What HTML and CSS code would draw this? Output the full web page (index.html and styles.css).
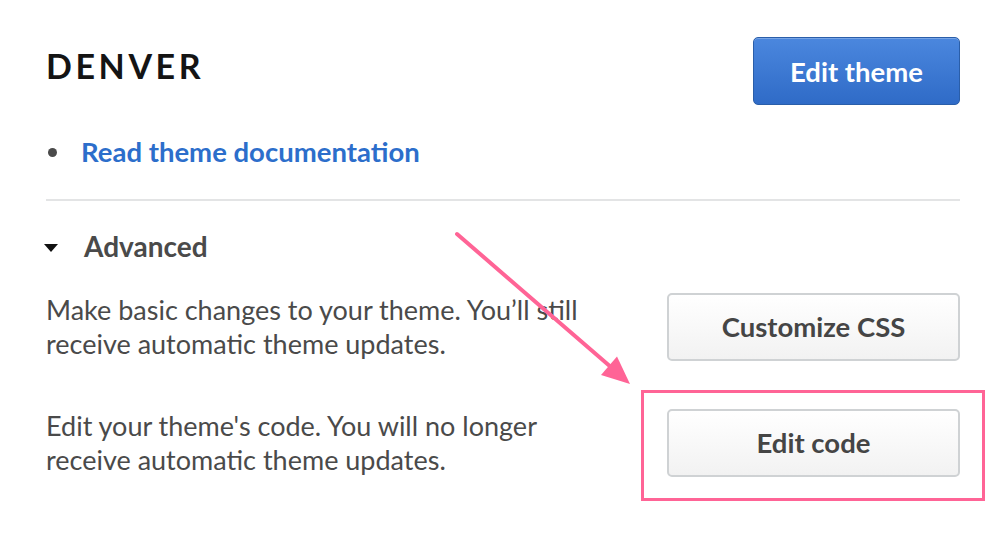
FILE: index.html
```html
<!DOCTYPE html>
<html lang="en">
<head>
<meta charset="utf-8">
<title>Denver theme</title>
<link rel="stylesheet" href="styles.css">
</head>
<body>
<main class="page">
  <header class="header">
    <h1 class="title">DENVER</h1>
    <button class="btn btn-primary">Edit theme</button>
  </header>
  <ul class="links">
    <li><a class="link" href="#">Read theme documentation</a></li>
  </ul>
  <hr class="divider">
  <section class="advanced">
    <div class="advanced-head">
      <span class="caret"></span>
      <span class="advanced-label">Advanced</span>
    </div>
    <div class="row">
      <p class="desc">Make basic changes to your theme. You’ll still receive automatic theme updates.</p>
      <button class="btn btn-default">Customize CSS</button>
    </div>
    <div class="row">
      <p class="desc">Edit your theme's code. You will no longer receive automatic theme updates.</p>
      <button class="btn btn-default">Edit code</button>
    </div>
  </section>
</main>
<svg class="annotation" width="994" height="548" viewBox="0 0 994 548" aria-hidden="true">
  <rect x="642.5" y="391.5" width="341" height="108" fill="none" stroke="#ff6496" stroke-width="3"/>
  <line x1="457" y1="234" x2="612" y2="368" stroke="#ff6496" stroke-width="4" stroke-linecap="round"/>
  <polygon points="601,375 617,356.5 630,384" fill="#ff6496"/>
</svg>
</body>
</html>
```
FILE: styles.css
```css
* { box-sizing: border-box; }

html, body {
  margin: 0;
  padding: 0;
  background: #ffffff;
}

body {
  font-family: Lato, "Open Sans", "Liberation Sans", sans-serif;
  color: #4a4a4a;
  position: relative;
  width: 994px;
  height: 548px;
  overflow: hidden;
}

.page {
  padding: 37px 34px 0 46px;
}

.header {
  display: flex;
  justify-content: space-between;
  align-items: flex-start;
}

.title {
  margin: 9px 0 0 0;
  font-size: 34px;
  line-height: 1.2;
  font-weight: 700;
  letter-spacing: 3.6px;
  color: #141414;
}

.btn {
  font-family: inherit;
  font-weight: 700;
  height: 68px;
  border-radius: 5px;
  cursor: pointer;
  padding: 0;
}

.btn-primary {
  width: 207px;
  font-size: 27.5px;
  color: #ffffff;
  background: linear-gradient(#4b87de, #2f6bc7);
  border: 1.5px solid #2a5ea9;
  box-shadow: inset 0 1px 0 rgba(255,255,255,0.25);
}

.btn-default {
  width: 293px;
  flex: none;
  font-size: 27.5px;
  color: #454545;
  background: linear-gradient(#ffffff, #f2f2f2);
  border: 2px solid #cfd2d4;
}

.links {
  list-style: none;
  margin: 30px 0 0 0;
  padding: 0;
}

.links li {
  display: flex;
  align-items: center;
  gap: 24px;
  font-size: 27.5px;
  line-height: 33px;
}

.links li::before {
  content: "";
  width: 9px;
  height: 9px;
  border-radius: 50%;
  background: #4a4a4a;
  margin-left: 2px;
  margin-top: 2px;
}

.link {
  color: #2c6ecb;
  font-weight: 700;
  text-decoration: none;
}

.divider {
  border: 0;
  border-top: 2px solid #e3e4e5;
  margin: 31px 0 0 0;
}

.advanced-head {
  display: flex;
  align-items: center;
  margin-top: 29px;
  gap: 26px;
}

.caret {
  width: 0;
  height: 0;
  border-left: 7.5px solid transparent;
  border-right: 7.5px solid transparent;
  border-top: 8px solid #111111;
  margin-left: -2px;
  margin-top: 2px;
}

.advanced-label {
  font-size: 28px;
  line-height: 1.2;
  font-weight: 700;
  color: #4a4a4a;
}

.row {
  display: flex;
  justify-content: space-between;
  align-items: center;
  margin-top: 29px;
}

.row + .row {
  margin-top: 48px;
}

.desc {
  margin: 0;
  max-width: 560px;
  font-size: 27px;
  line-height: 34px;
  color: #4a4a4a;
}

.annotation {
  position: absolute;
  top: 0;
  left: 0;
  pointer-events: none;
}
```
